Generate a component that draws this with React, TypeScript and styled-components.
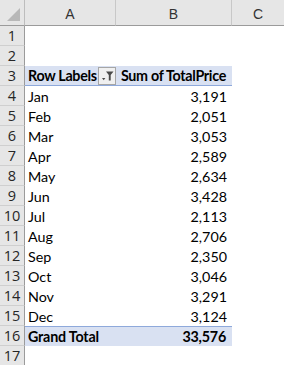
import styled, { createGlobalStyle } from "styled-components";

const GlobalStyle = createGlobalStyle`
  html, body {
    margin: 0;
    padding: 0;
    background: #ffffff;
  }
  body {
    font-family: Lato, "Liberation Sans", sans-serif;
    overflow: hidden;
  }
`;

type Row = { label: string; value: string };

const months: Row[] = [
  { label: "Jan", value: "3,191" },
  { label: "Feb", value: "2,051" },
  { label: "Mar", value: "3,053" },
  { label: "Apr", value: "2,589" },
  { label: "May", value: "2,634" },
  { label: "Jun", value: "3,428" },
  { label: "Jul", value: "2,113" },
  { label: "Aug", value: "2,706" },
  { label: "Sep", value: "2,350" },
  { label: "Oct", value: "3,046" },
  { label: "Nov", value: "3,291" },
  { label: "Dec", value: "3,124" },
];

const App = () => {
  return (
    <>
      <GlobalStyle />
      <Sheet>
        <Corner>
          <CornerMark />
        </Corner>
        <ColHead>A</ColHead>
        <ColHead>B</ColHead>
        <ColHead $last>C</ColHead>

        <RowHead>1</RowHead>
        <Cell />
        <Cell />
        <Cell />

        <RowHead>2</RowHead>
        <Cell />
        <Cell />
        <Cell />

        <RowHead>3</RowHead>
        <PivotHead $first>
          Row Labels
          <FilterBtn>
            <svg width="13" height="13" viewBox="0 0 13 13">
              <path d="M5 2.5h7.5l-2.8 3.4V11.5H7.8V5.9z" fill="#4a4a4a" />
              <path d="M1 9h3.4l-1.7 2.2z" fill="#4a4a4a" />
            </svg>
          </FilterBtn>
        </PivotHead>
        <PivotHead $num>Sum of TotalPrice</PivotHead>
        <Cell />

        {months.map((m, i) => (
          <Line key={m.label}>
            <RowHead>{i + 4}</RowHead>
            <Cell>{m.label}</Cell>
            <Cell $num>{m.value}</Cell>
            <Cell />
          </Line>
        ))}

        <RowHead>16</RowHead>
        <TotalCell>Grand Total</TotalCell>
        <TotalCell $num>33,576</TotalCell>
        <Cell />

        <RowHead>17</RowHead>
        <Cell />
        <Cell />
        <Cell />
      </Sheet>
    </>
  );
};

export default App;

const Sheet = styled.div`
  display: grid;
  grid-template-columns: 25px 91px 116px 52px;
  grid-template-rows: 26px;
  grid-auto-rows: 20px;
  width: 284px;
  height: 365px;
  overflow: hidden;
  font-size: 14.3px;
  color: #000;
`;

const Line = styled.div`
  display: contents;
`;

const Corner = styled.div`
  position: relative;
  background: #e6e6e6;
  border-right: 1px solid #bdbdbd;
  border-bottom: 1px solid #9b9b9b;
`;

const CornerMark = styled.div`
  position: absolute;
  right: 4px;
  bottom: 4px;
  width: 0;
  height: 0;
  border-left: 13px solid transparent;
  border-bottom: 13px solid #b8b8b8;
`;

const ColHead = styled.div<{ $last?: boolean }>`
  display: flex;
  align-items: center;
  justify-content: center;
  padding-top: 2px;
  background: #e6e6e6;
  border-bottom: 1px solid #9b9b9b;
  border-right: ${(p) => (p.$last ? "none" : "1px solid #c8c8c8")};
  color: #333;
  font-family: "Liberation Sans", Arial, sans-serif;
  font-size: 14px;
`;

const RowHead = styled.div`
  display: flex;
  align-items: center;
  justify-content: center;
  background: #e6e6e6;
  border-right: 1px solid #9b9b9b;
  border-bottom: 1px solid #cfcfcf;
  color: #262626;
  font-family: "Open Sans", "Liberation Sans", sans-serif;
  font-size: 14.5px;
  box-sizing: border-box;
`;

const Cell = styled.div<{ $num?: boolean }>`
  display: flex;
  align-items: center;
  justify-content: ${(p) => (p.$num ? "flex-end" : "flex-start")};
  padding: 0 5px 0 3px;
  white-space: nowrap;
`;

const PivotHead = styled(Cell)<{ $first?: boolean }>`
  background: #d9e1f2;
  border-bottom: 1px solid #8ea9db;
  font-weight: 700;
  letter-spacing: -0.3px;
  padding-right: ${(p) => (p.$first ? "0" : "6px")};
  box-sizing: border-box;
`;

const TotalCell = styled(Cell)`
  background: #d9e1f2;
  border-top: 1px solid #8ea9db;
  font-weight: 700;
  letter-spacing: -0.2px;
  padding-right: 6px;
  box-sizing: border-box;
`;

const FilterBtn = styled.span`
  display: inline-flex;
  flex-shrink: 0;
  align-items: center;
  justify-content: center;
  width: 16px;
  height: 16px;
  margin-left: auto;
  margin-right: 0;
  border: 1px solid #a6a6a6;
  background: #f0f0f0;
`;
